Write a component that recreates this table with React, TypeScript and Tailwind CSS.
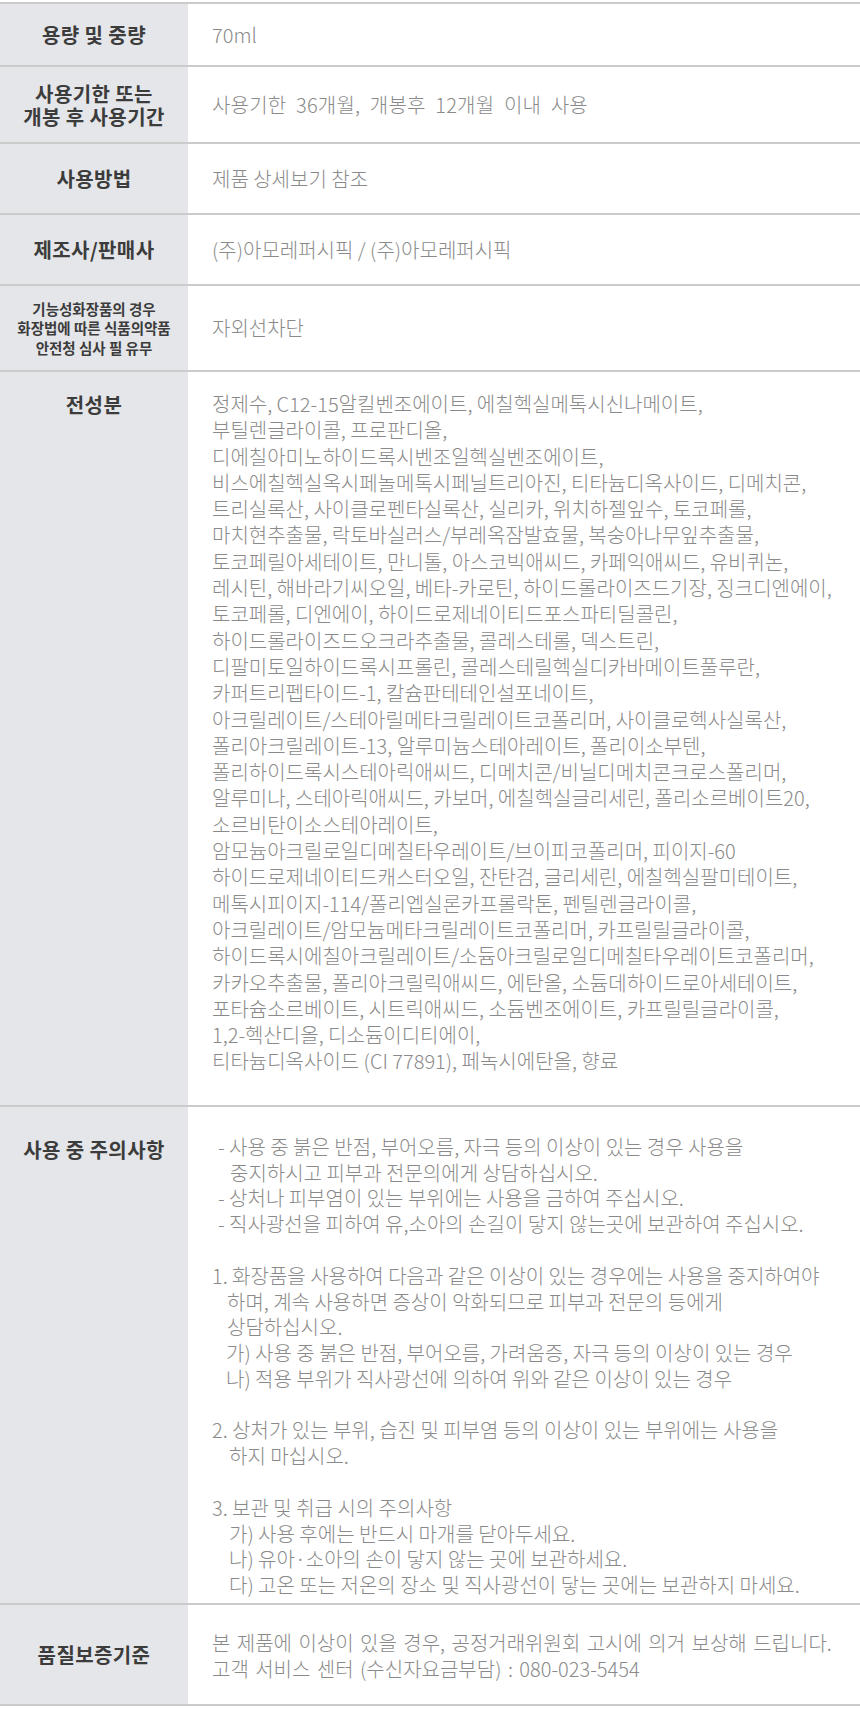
const INGREDIENTS = [
  "정제수, C12-15알킬벤조에이트, 에칠헥실메톡시신나메이트,",
  "부틸렌글라이콜, 프로판디올,",
  "디에칠아미노하이드록시벤조일헥실벤조에이트,",
  "비스에칠헥실옥시페놀메톡시페닐트리아진, 티타늄디옥사이드, 디메치콘,",
  "트리실록산, 사이클로펜타실록산, 실리카, 위치하젤잎수, 토코페롤,",
  "마치현추출물, 락토바실러스/부레옥잠발효물, 복숭아나무잎추출물,",
  "토코페릴아세테이트, 만니톨, 아스코빅애씨드, 카페익애씨드, 유비퀴논,",
  "레시틴, 해바라기씨오일, 베타-카로틴, 하이드롤라이즈드기장, 징크디엔에이,",
  "토코페롤, 디엔에이, 하이드로제네이티드포스파티딜콜린,",
  "하이드롤라이즈드오크라추출물, 콜레스테롤, 덱스트린,",
  "디팔미토일하이드록시프롤린, 콜레스테릴헥실디카바메이트풀루란,",
  "카퍼트리펩타이드-1, 칼슘판테테인설포네이트,",
  "아크릴레이트/스테아릴메타크릴레이트코폴리머, 사이클로헥사실록산,",
  "폴리아크릴레이트-13, 알루미늄스테아레이트, 폴리이소부텐,",
  "폴리하이드록시스테아릭애씨드, 디메치콘/비닐디메치콘크로스폴리머,",
  "알루미나, 스테아릭애씨드, 카보머, 에칠헥실글리세린, 폴리소르베이트20,",
  "소르비탄이소스테아레이트,",
  "암모늄아크릴로일디메칠타우레이트/브이피코폴리머, 피이지-60",
  "하이드로제네이티드캐스터오일, 잔탄검, 글리세린, 에칠헥실팔미테이트,",
  "메톡시피이지-114/폴리엡실론카프롤락톤, 펜틸렌글라이콜,",
  "아크릴레이트/암모늄메타크릴레이트코폴리머, 카프릴릴글라이콜,",
  "하이드록시에칠아크릴레이트/소듐아크릴로일디메칠타우레이트코폴리머,",
  "카카오추출물, 폴리아크릴릭애씨드, 에탄올, 소듐데하이드로아세테이트,",
  "포타슘소르베이트, 시트릭애씨드, 소듐벤조에이트, 카프릴릴글라이콜,",
  "1,2-헥산디올, 디소듐이디티에이,",
  "티타늄디옥사이드 (CI 77891), 페녹시에탄올, 향료",
];

// each caution line carries its own indent
const CAUTIONS: { text: string; indent: string }[] = [
  { text: "- 사용 중 붉은 반점, 부어오름, 자극 등의 이상이 있는 경우 사용을", indent: "dash" },
  { text: "중지하시고 피부과 전문의에게 상담하십시오.", indent: "dashCont" },
  { text: "- 상처나 피부염이 있는 부위에는 사용을 금하여 주십시오.", indent: "dash" },
  { text: "- 직사광선을 피하여 유,소아의 손길이 닿지 않는곳에 보관하여 주십시오.", indent: "dash" },
  { text: "", indent: "blank" },
  { text: "1. 화장품을 사용하여 다음과 같은 이상이 있는 경우에는 사용을 중지하여야", indent: "num" },
  { text: "하며, 계속 사용하면 증상이 악화되므로 피부과 전문의 등에게", indent: "numCont" },
  { text: "상담하십시오.", indent: "numCont" },
  { text: "가) 사용 중 붉은 반점, 부어오름, 가려움증, 자극 등의 이상이 있는 경우", indent: "sub" },
  { text: "나) 적용 부위가 직사광선에 의하여 위와 같은 이상이 있는 경우", indent: "sub" },
  { text: "", indent: "blank" },
  { text: "2. 상처가 있는 부위, 습진 및 피부염 등의 이상이 있는 부위에는 사용을", indent: "num" },
  { text: "하지 마십시오.", indent: "subCont" },
  { text: "", indent: "blank" },
  { text: "3. 보관 및 취급 시의 주의사항", indent: "num" },
  { text: "가) 사용 후에는 반드시 마개를 닫아두세요.", indent: "subCont" },
  { text: "나) 유아·소아의 손이 닿지 않는 곳에 보관하세요.", indent: "subCont" },
  { text: "다) 고온 또는 저온의 장소 및 직사광선이 닿는 곳에는 보관하지 마세요.", indent: "subCont" },
];

const INDENT: Record<string, string> = {
  dash: "ml-[6px]",
  dashCont: "ml-[18px]",
  num: "ml-0",
  numCont: "ml-[15px]",
  sub: "ml-[14px]",
  subCont: "ml-[17px]",
  blank: "ml-0",
};

const FONT = "font-['Noto_Sans_CJK_KR','Noto_Sans',sans-serif]";
const VALUE = "text-[20px] font-light";

function Label({ children, small }: { children: React.ReactNode; small?: boolean }) {
  return (
    <div
      className={`text-center font-bold text-[#3c3c3c] ${
        small ? "text-[14.5px] leading-[19.5px]" : "text-[20px] leading-[23px] tracking-[0.4px]"
      }`}
    >
      {children}
    </div>
  );
}

function Row({
  label,
  children,
  height,
  top,
}: {
  label: React.ReactNode;
  children: React.ReactNode;
  height?: string;
  top?: boolean;
}) {
  return (
    <div className={`flex border-b-2 border-[#cbcbcb] ${height ?? ""}`}>
      <div
        className={`flex w-[188px] shrink-0 justify-center bg-[#e5e6e9] ${
          top ? "items-start" : "items-center"
        }`}
      >
        {label}
      </div>
      <div className={`flex flex-1 pl-[24px] ${top ? "items-start" : "items-center"}`}>{children}</div>
    </div>
  );
}

export default function App() {
  return (
    <div className={`min-h-[1720px] w-[860px] bg-white pt-[2px] text-[#8a8a8a] ${FONT}`}>
      <div className="border-t-2 border-[#cbcbcb]">
        <Row label={<Label>용량 및 중량</Label>} height="h-[63px]">
          <span className={VALUE}>70ml</span>
        </Row>
        <Row
          label={
            <Label>
              사용기한 또는
              <br />
              개봉 후 사용기간
            </Label>
          }
          height="h-[77px]"
        >
          <span className={`${VALUE} tracking-[0.2px] [word-spacing:5px]`}>
            사용기한 36개월, 개봉후 12개월 이내 사용
          </span>
        </Row>
        <Row label={<Label>사용방법</Label>} height="h-[71px]">
          <span className={VALUE}>제품 상세보기 참조</span>
        </Row>
        <Row label={<Label>제조사/판매사</Label>} height="h-[71px]">
          <span className={VALUE}>(주)아모레퍼시픽 / (주)아모레퍼시픽</span>
        </Row>
        <Row
          label={
            <Label small>
              기능성화장품의 경우
              <br />
              화장법에 따른 식품의약품
              <br />
              안전청 심사 필 유무
            </Label>
          }
          height="h-[86px]"
        >
          <span className={VALUE}>자외선차단</span>
        </Row>
        <Row
          top
          label={
            <div className="pt-[21px]">
              <Label>전성분</Label>
            </div>
          }
        >
          <div className={`pt-[19px] pb-[30px] leading-[26.3px] ${VALUE}`}>
            {INGREDIENTS.map((line, i) => (
              <div key={i} className="whitespace-nowrap">
                {line}
              </div>
            ))}
          </div>
        </Row>
        <Row
          top
          label={
            <div className="pt-[31px]">
              <Label>사용 중 주의사항</Label>
            </div>
          }
        >
          <div className={`pt-[27px] pb-[5px] leading-[25.8px] ${VALUE}`}>
            {CAUTIONS.map((c, i) => (
              <div key={i} className={`h-[25.8px] whitespace-nowrap ${INDENT[c.indent]}`}>
                {c.text}
              </div>
            ))}
          </div>
        </Row>
        <Row label={<Label>품질보증기준</Label>} height="h-[101px]">
          <div className={`pt-[2px] leading-[26px] [word-spacing:2px] ${VALUE}`}>
            <div>본 제품에 이상이 있을 경우, 공정거래위원회 고시에 의거 보상해 드립니다.</div>
            <div>고객 서비스 센터 (수신자요금부담) : 080-023-5454</div>
          </div>
        </Row>
      </div>
    </div>
  );
}
